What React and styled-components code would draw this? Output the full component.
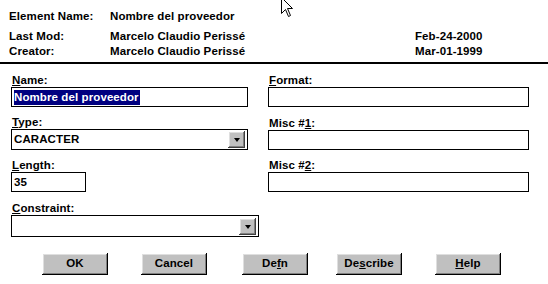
import React from "react";
import styled, { createGlobalStyle } from "styled-components";

const Global = createGlobalStyle`
  html, body { margin: 0; padding: 0; background: #ffffff; }
  body { font-family: "Liberation Sans", Arial, sans-serif; }
`;

const Page = styled.div`
  position: relative;
  width: 548px;
  height: 284px;
  background: #ffffff;
  color: #000;
  font-family: "Liberation Sans", Arial, sans-serif;
  font-size: 11.5px;
  font-weight: 700;
  line-height: 13px;
  letter-spacing: 0.1px;
  overflow: hidden;
`;

const Header = styled.div`
  display: grid;
  grid-template-columns: 101px 305px auto;
  grid-template-rows: 20px 15px 13px;
  padding: 10px 0 4px 9px;
`;

const Cell = styled.div`
  white-space: nowrap;
`;

const Divider = styled.div`
  height: 2px;
  background: #000;
`;

const Form = styled.div`
  display: grid;
  grid-template-columns: 248px 261px;
  column-gap: 9px;
  padding: 10px 0 0 11px;
  align-items: start;
`;

const Column = styled.div`
  display: flex;
  flex-direction: column;
`;

const Field = styled.div`
  display: flex;
  flex-direction: column;
  margin-top: ${(p) => p.$top || 0}px;
`;

const Label = styled.label`
  height: 13px;
  padding-left: 1px;
  white-space: nowrap;
`;

const Key = styled.span`
  text-decoration: underline;
  text-underline-offset: 1px;
`;

const TextBox = styled.div`
  box-sizing: border-box;
  width: ${(p) => p.$width || "100%"};
  height: ${(p) => p.$height || 20}px;
  border: 1px solid #000;
  background: #fff;
  padding: 3px 2px 0 2px;
  white-space: nowrap;
`;

const Selected = styled.span`
  background: #000080;
  color: #fff;
  padding: 1px 1px 2px 0;
`;

const SelectBox = styled.div`
  box-sizing: border-box;
  width: ${(p) => p.$width}px;
  height: ${(p) => p.$height || 21}px;
  border: 1px solid #000;
  background: #fff;
  display: flex;
  align-items: center;
  justify-content: space-between;
  padding: 0 1px 0 2px;
`;

const DropButton = styled.div`
  box-sizing: border-box;
  width: 17px;
  height: 17px;
  margin-right: 1px;
  background: #c0c0c0;
  box-shadow: inset -1px -1px #404040, inset 1px 1px #ffffff,
    inset -2px -2px #808080, inset 2px 2px #dfdfdf;
  display: flex;
  align-items: center;
  justify-content: center;
`;

const Arrow = styled.div`
  width: 0;
  height: 0;
  border-left: 3.5px solid transparent;
  border-right: 3.5px solid transparent;
  border-top: 4px solid #000;
  margin-top: 1px;
`;

const ButtonRow = styled.div`
  display: flex;
  padding: 16px 0 0 42px;
`;

const Button = styled.div`
  box-sizing: border-box;
  width: 66px;
  height: 22px;
  margin-left: ${(p) => p.$gap || 0}px;
  background: #c0c0c0;
  box-shadow: inset -1px -1px #000000, inset 1px 1px #ffffff,
    inset -2px -2px #808080, inset 2px 2px #dfdfdf;
  display: flex;
  align-items: center;
  justify-content: center;
  padding-bottom: 1px;
`;

const Cursor = styled.svg`
  position: absolute;
  left: 281px;
  top: -3px;
`;

function Select({ width, height, value }) {
  return (
    <SelectBox $width={width} $height={height}>
      <span>{value}</span>
      <DropButton>
        <Arrow />
      </DropButton>
    </SelectBox>
  );
}

export default function App() {
  return (
    <Page>
      <Global />
      <Header>
        <Cell>Element Name:</Cell>
        <Cell>Nombre del proveedor</Cell>
        <Cell />
        <Cell>Last Mod:</Cell>
        <Cell>Marcelo Claudio Perissé</Cell>
        <Cell>Feb-24-2000</Cell>
        <Cell>Creator:</Cell>
        <Cell>Marcelo Claudio Perissé</Cell>
        <Cell>Mar-01-1999</Cell>
      </Header>
      <Divider />
      <Form>
        <Column>
          <Field>
            <Label><Key>N</Key>ame:</Label>
            <TextBox $width="237px">
              <Selected>Nombre del proveedor</Selected>
            </TextBox>
          </Field>
          <Field $top={9}>
            <Label><Key>T</Key>ype:</Label>
            <Select width={237} value="CARACTER" />
          </Field>
          <Field $top={9}>
            <Label><Key>L</Key>ength:</Label>
            <TextBox $width="75px">35</TextBox>
          </Field>
          <Field $top={10}>
            <Label><Key>C</Key>onstraint:</Label>
            <Select width={248} height={22} value="" />
          </Field>
        </Column>
        <Column>
          <Field>
            <Label><Key>F</Key>ormat:</Label>
            <TextBox />
          </Field>
          <Field $top={10}>
            <Label>Misc #<Key>1</Key>:</Label>
            <TextBox />
          </Field>
          <Field $top={9}>
            <Label>Misc #<Key>2</Key>:</Label>
            <TextBox />
          </Field>
        </Column>
      </Form>
      <ButtonRow>
        <Button>OK</Button>
        <Button $gap={33}>Cancel</Button>
        <Button $gap={35}>De<Key>f</Key>n</Button>
        <Button $gap={28}>De<Key>s</Key>cribe</Button>
        <Button $gap={33}><Key>H</Key>elp</Button>
      </ButtonRow>
      <Cursor width="13" height="21" viewBox="0 0 13 21">
        <path
          d="M0.5 0.5 L0.5 16.5 L4.5 12.5 L7.5 19.5 L9.5 18.5 L6.5 11.5 L11.5 11.5 Z"
          fill="#fff"
          stroke="#000"
          strokeWidth="1"
        />
      </Cursor>
    </Page>
  );
}
